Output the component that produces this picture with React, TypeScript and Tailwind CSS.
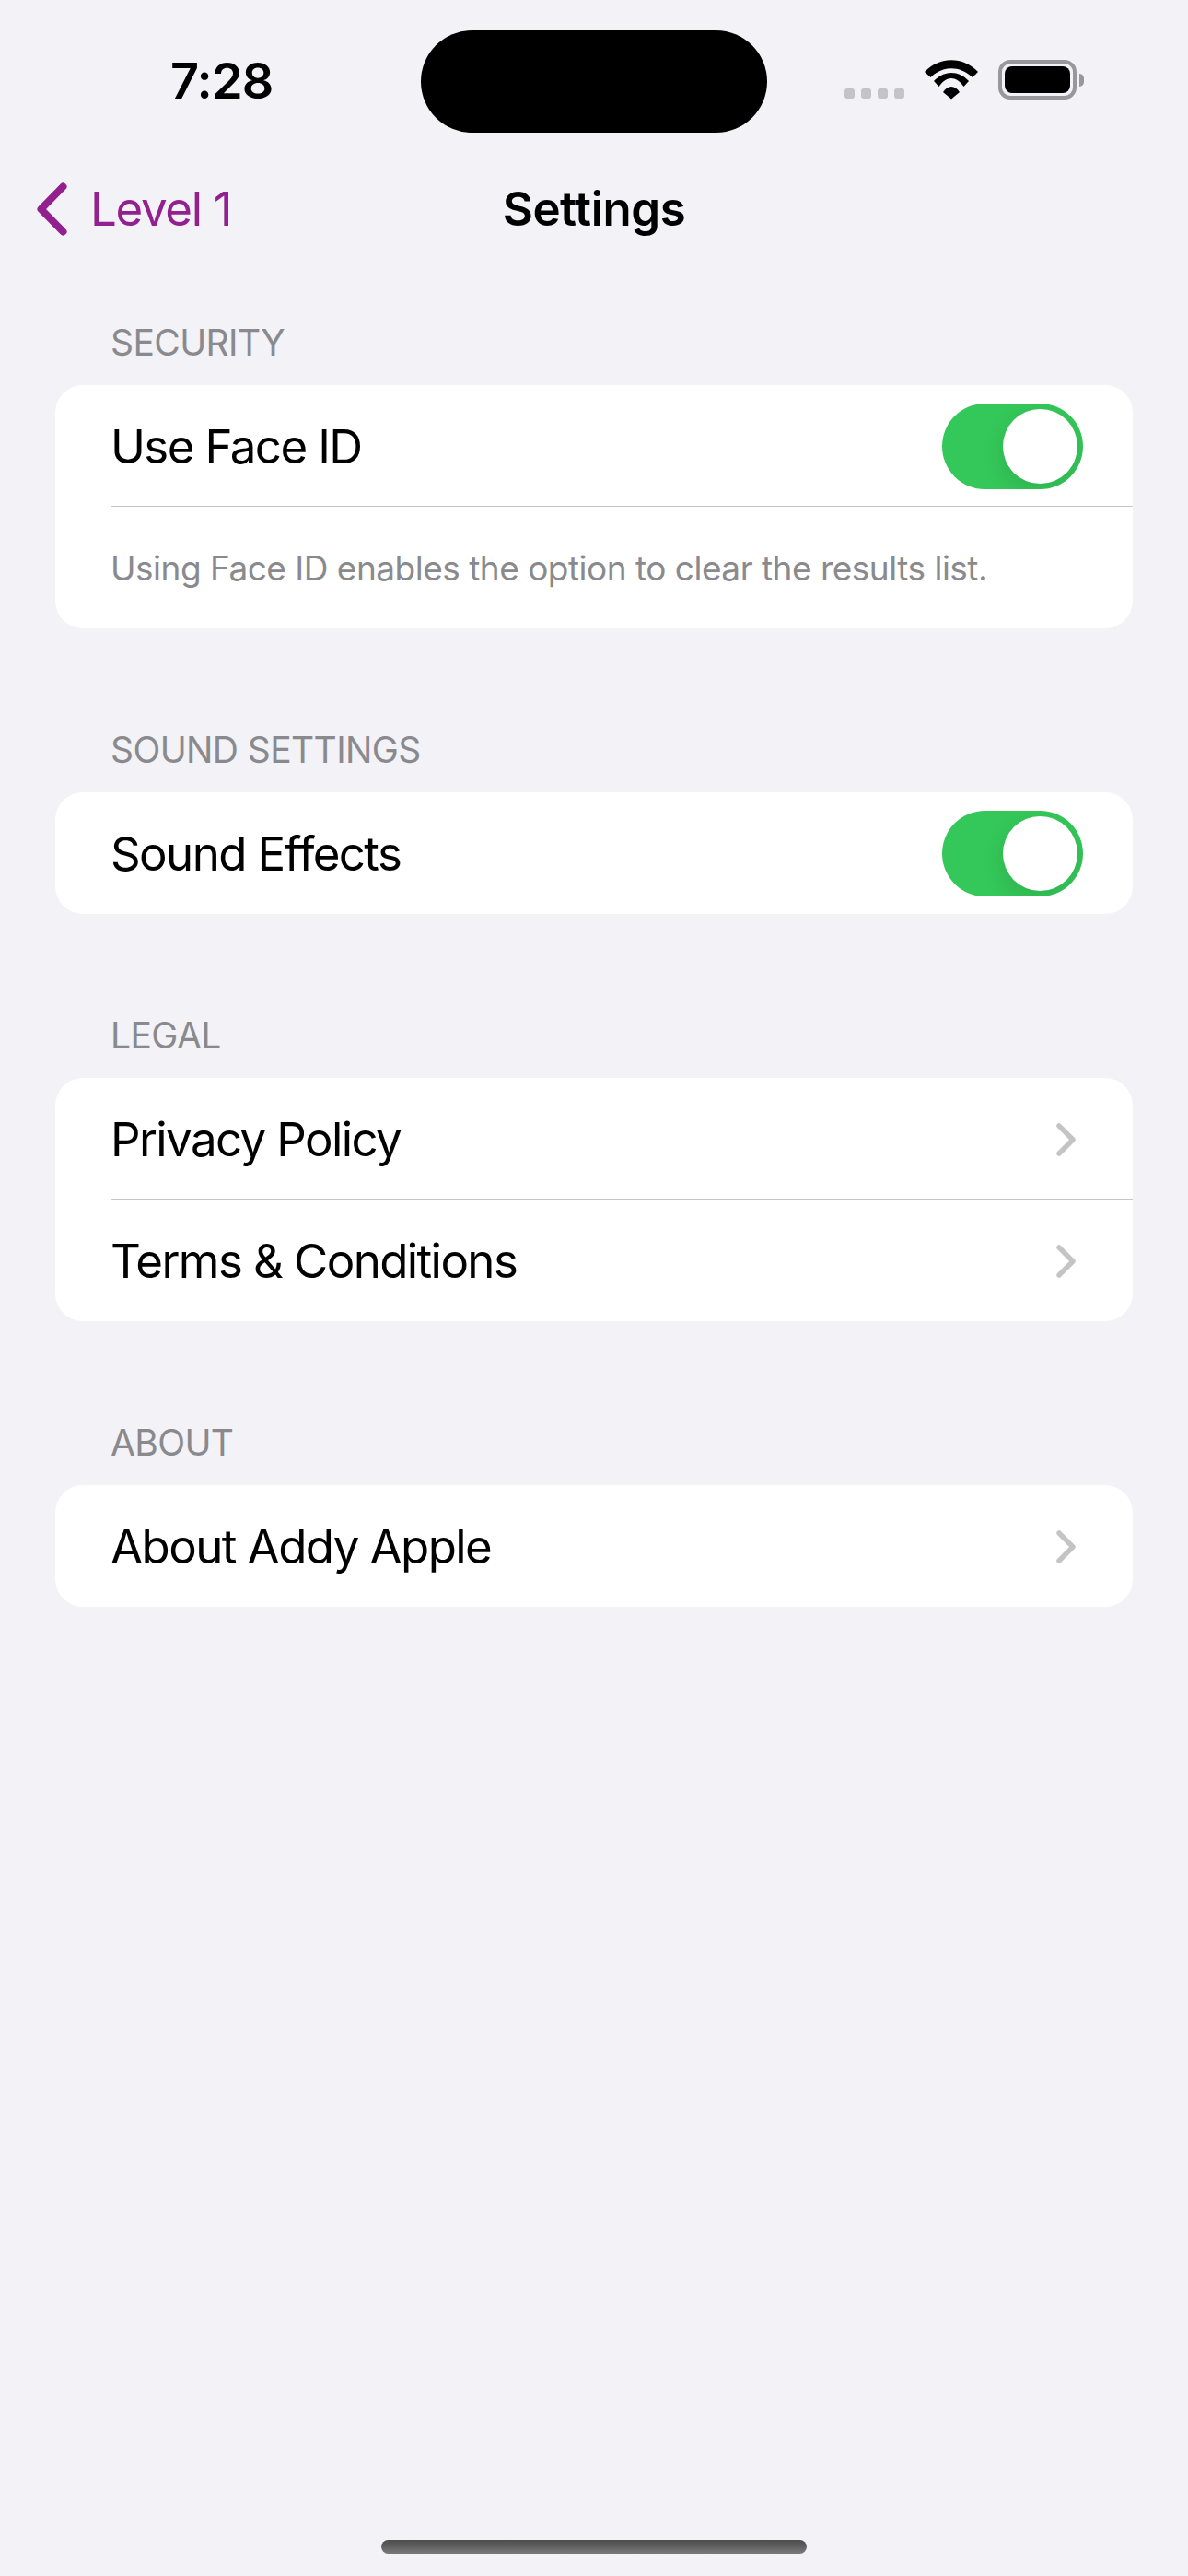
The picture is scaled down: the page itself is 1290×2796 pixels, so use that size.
import React from "react";

const Chevron = () => (
  <svg width="21" height="36" viewBox="0 0 21 36" fill="none" className="mr-[8px] shrink-0">
    <path d="M3 3 L18 18 L3 33" stroke="#c4c4c6" strokeWidth="5.5" strokeLinecap="round" strokeLinejoin="round" />
  </svg>
);

const Toggle = () => (
  <div className="flex h-[93px] w-[153px] shrink-0 items-center justify-end overflow-hidden rounded-full bg-[#34c759] pr-[6px]">
    <div className="h-[81px] w-[81px] rounded-full bg-white shadow-[0_9px_24px_rgba(0,0,0,0.1)]" />
  </div>
);

const Row = ({ label, children, divider }: { label: string; children: React.ReactNode; divider?: boolean }) => (
  <div className="pl-[60px]">
    <div className={`flex h-[132px] items-center justify-between pr-[54px] ${divider ? "border-b border-[#c6c6c8] pt-[2px]" : "pt-px"}`}>
      <span className="text-[51px] leading-none tracking-[-1.6px] text-black">{label}</span>
      {children}
    </div>
  </div>
);

const Section = ({ title, children }: { title: string; children: React.ReactNode }) => (
  <section className="mb-[109px]">
    <h2 className="mb-[23px] pl-[120px] text-[39px] leading-[46px] tracking-[-0.6px] text-[#8a8a8e]">{title}</h2>
    <div className="mx-[60px] overflow-hidden rounded-[30px] bg-white">{children}</div>
  </section>
);

const StatusBar = () => (
  <div className="flex h-[144px] items-start pt-[33px]">
    <div className="ml-[185px] mt-[25px] w-[272px] text-[54px] leading-[60px] font-semibold tracking-[-0.8px] text-black">7:28</div>
    <div className="h-[111px] w-[376px] rounded-full bg-black" />
    <div className="ml-[84px] mt-[32px] flex items-end">
      <div className="flex gap-[7px] pb-px">
        <div className="h-[11px] w-[11px] rounded-[3px] bg-[#c4c4c8]" />
        <div className="h-[11px] w-[11px] rounded-[3px] bg-[#c4c4c8]" />
        <div className="h-[11px] w-[11px] rounded-[3px] bg-[#c4c4c8]" />
        <div className="h-[11px] w-[11px] rounded-[3px] bg-[#c4c4c8]" />
      </div>
      <svg width="58" height="43" viewBox="0 0 58 43" className="ml-[22px]">
        <path d="M0 13 C16 -4 42 -4 58 13 L52 19 C38 6 20 6 6.5 19 Z" fill="#000" />
        <path d="M10 23 C21 11 37 11 48 23 L42.5 29 C34 17 24 17 15.5 29 Z" fill="#000" />
        <path d="M20 35 C25 27 33 27 38 35 L29 42.5 Z" fill="#000" />
      </svg>
      <div className="ml-[22px] flex items-center">
        <div className="h-[43px] w-[85px] rounded-[13px] border-[4px] border-[#98989c] p-[3px]">
          <div className="h-full w-full rounded-[8px] bg-black" />
        </div>
        <div className="ml-[3px] h-[14px] w-[5px] rounded-r-full bg-[#98989c]" />
      </div>
    </div>
  </div>
);

const NavBar = () => (
  <div className="relative flex h-[165px] items-center pl-[40px]">
    <svg width="33" height="58" viewBox="0 0 33 58" fill="none" className="shrink-0">
      <path d="M28.5 4.5 L4.5 29 L28.5 53.5" stroke="#92218f" strokeWidth="8" strokeLinecap="round" strokeLinejoin="round" />
    </svg>
    <span className="ml-[25px] text-[51px] leading-none tracking-[-1.3px] text-[#92218f]">Level 1</span>
    <span className="absolute left-0 right-0 text-center text-[51px] leading-none font-semibold tracking-[-0.45px] text-black">Settings</span>
  </div>
);

export default function App() {
  return (
    <div className="flex h-[2796px] w-[1290px] flex-col bg-[#f2f2f7] font-['Inter',sans-serif]">
      <StatusBar />
      <NavBar />
      <main className="flex-1 pt-[40px]">
        <Section title="SECURITY">
          <Row label="Use Face ID" divider><Toggle /></Row>
          <p className="flex h-[132px] items-center pl-[60px] text-[37px] leading-none tracking-[-0.5px] text-[#8a8a8e]">
            Using Face ID enables the option to clear the results list.
          </p>
        </Section>
        <Section title="SOUND SETTINGS">
          <Row label="Sound Effects"><Toggle /></Row>
        </Section>
        <Section title="LEGAL">
          <Row label="Privacy Policy" divider><Chevron /></Row>
          <Row label="Terms &amp; Conditions"><Chevron /></Row>
        </Section>
        <Section title="ABOUT">
          <Row label="About Addy Apple"><Chevron /></Row>
        </Section>
      </main>
      <div className="flex h-[39px] justify-center">
        <div className="h-[15px] w-[462px] rounded-full bg-gradient-to-b from-[#4c4c4c] to-[#7a7a7a]" />
      </div>
    </div>
  );
}
